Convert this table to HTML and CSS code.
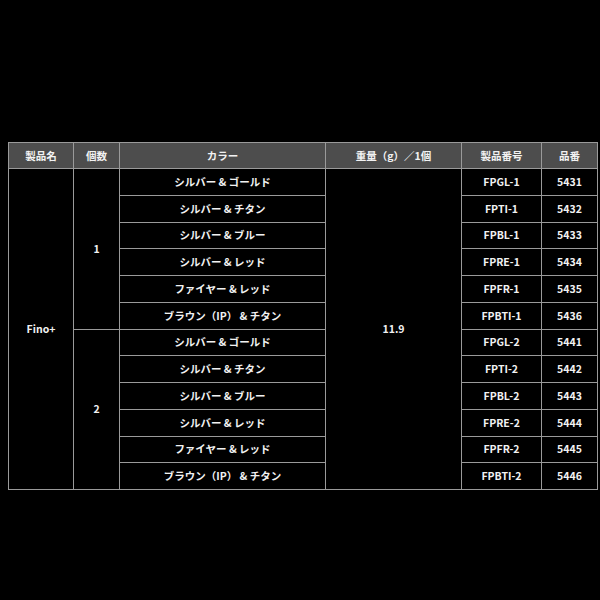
FILE: index.html
```html
<!DOCTYPE html>
<html lang="ja">
<head>
<meta charset="utf-8">
<link rel="stylesheet" href="styles.css">
</head>
<body>
<div class="page">
<table class="spec">
<colgroup>
<col class="c-name"><col class="c-qty"><col class="c-color"><col class="c-weight"><col class="c-code"><col class="c-num">
</colgroup>
<thead>
<tr><th>製品名</th><th>個数</th><th>カラー</th><th>重量（g）／1個</th><th>製品番号</th><th>品番</th></tr>
</thead>
<tbody>
<tr><td rowspan="12">Fino+</td><td rowspan="6">1</td><td>シルバー &amp; ゴールド</td><td rowspan="12">11.9</td><td>FPGL-1</td><td>5431</td></tr>
<tr><td>シルバー &amp; チタン</td><td>FPTI-1</td><td>5432</td></tr>
<tr><td>シルバー &amp; ブルー</td><td>FPBL-1</td><td>5433</td></tr>
<tr><td>シルバー &amp; レッド</td><td>FPRE-1</td><td>5434</td></tr>
<tr><td>ファイヤー &amp; レッド</td><td>FPFR-1</td><td>5435</td></tr>
<tr><td>ブラウン（IP） &amp; チタン</td><td>FPBTI-1</td><td>5436</td></tr>
<tr><td rowspan="6">2</td><td>シルバー &amp; ゴールド</td><td>FPGL-2</td><td>5441</td></tr>
<tr><td>シルバー &amp; チタン</td><td>FPTI-2</td><td>5442</td></tr>
<tr><td>シルバー &amp; ブルー</td><td>FPBL-2</td><td>5443</td></tr>
<tr><td>シルバー &amp; レッド</td><td>FPRE-2</td><td>5444</td></tr>
<tr><td>ファイヤー &amp; レッド</td><td>FPFR-2</td><td>5445</td></tr>
<tr><td>ブラウン（IP） &amp; チタン</td><td>FPBTI-2</td><td>5446</td></tr>
</tbody>
</table>
</div>
</body>
</html>
```

FILE: styles.css
```css
html, body {
  margin: 0;
  padding: 0;
  background: #000;
}
.page {
  width: 600px;
  height: 600px;
  padding: 142px 0 0 8px;
  box-sizing: border-box;
}
.spec {
  border-collapse: collapse;
  table-layout: fixed;
  width: 589px;
  font-family: "Noto Sans CJK JP", "Noto Sans", sans-serif;
  font-weight: bold;
  font-size: 10.5px;
  color: #f2f2f2;
}
.c-name { width: 65px; }
.c-qty { width: 46px; }
.c-color { width: 206px; }
.c-weight { width: 136px; }
.c-code { width: 80px; }
.c-num { width: 56px; }
.spec th, .spec td {
  border: 1px solid #9a9a9a;
  text-align: center;
  vertical-align: middle;
  padding: 0;
  line-height: 14px;
}
.spec th {
  background: #4d4d4d;
  height: 26px;
  box-sizing: border-box;
}
.spec tbody tr {
  height: 26.75px;
}
```
